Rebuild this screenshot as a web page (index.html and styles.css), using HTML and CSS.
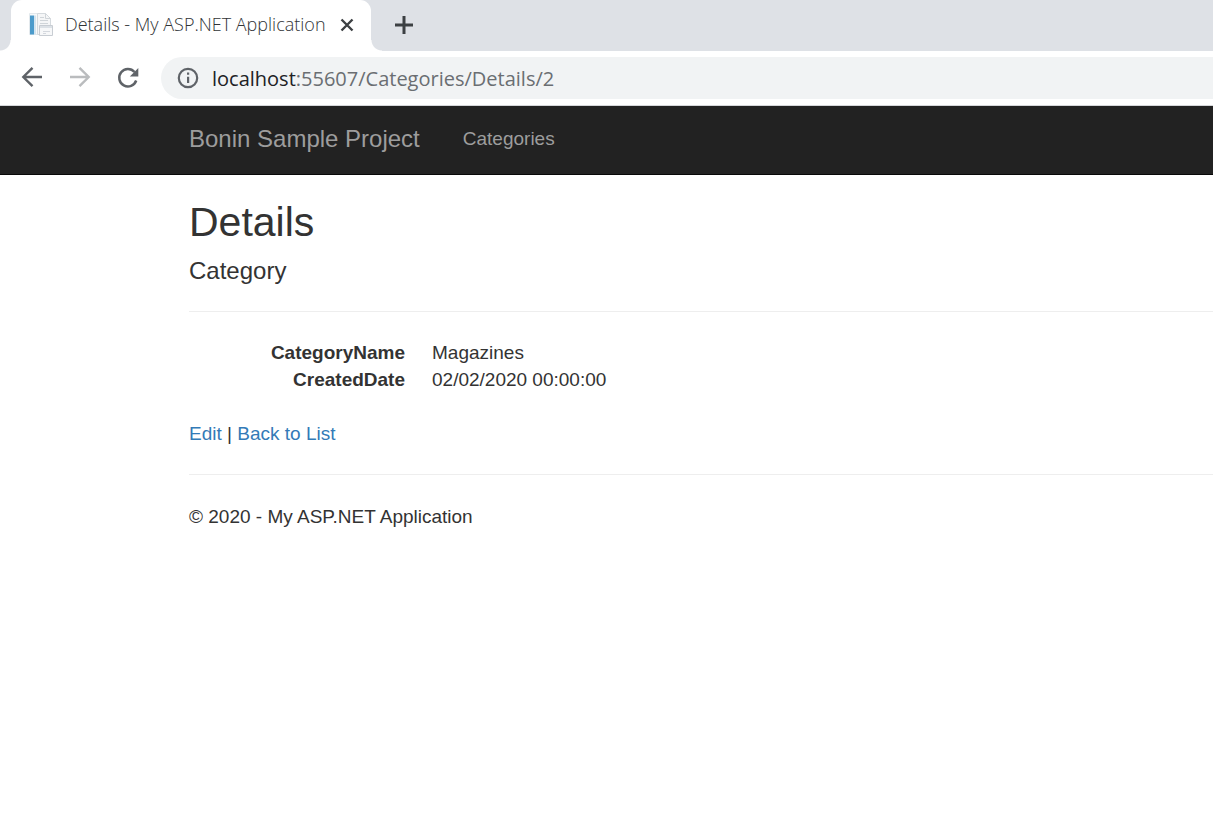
FILE: index.html
```html
<!DOCTYPE html>
<html lang="en">
<head>
<meta charset="utf-8">
<meta name="viewport" content="width=device-width, initial-scale=1">
<title>Details - My ASP.NET Application</title>
<link rel="stylesheet" href="styles.css">
</head>
<body>
<div class="browser">
  <div class="tab-strip">
    <div class="tab">
      <svg class="favicon" width="26" height="26" viewBox="0 0 26 26" aria-hidden="true">
        <path d="M1.500 1.500h15l5 5v16h-20z" fill="#f7f9fa" stroke="#e3e9ed"/>
        <path d="M2 3.500h4v19h-4z" fill="#4c9bcb"/>
        <path d="M6 3.500h2v19h-2z" fill="#d3e4ef"/>
        <path d="M9.500 1.500h8l5 5v16h-13z" fill="#f5f6f7" stroke="#d5dade"/>
        <path d="M17.500 1.500v5h5M12 5.500h4M12 8.500h8M12 11.500h8" fill="none" stroke="#d0d5d9"/>
        <path d="M11.500 13.500h13v10h-13z" fill="#f7f8f9" stroke="#c8cdd3"/>
        <path d="M12 14h12v2H12z" fill="#dce1e6"/>
        <path d="M15 19.500h7M15 21.500h3" stroke="#d4d8de"/>
      </svg>
      <span class="tab-title">Details - My ASP.NET Application</span>
      <button class="icon-button tab-close" type="button" aria-label="Close tab">
        <svg width="14" height="14" viewBox="0 0 14 14"><path d="M1.500 1.500l11 11M12.500 1.500l-11 11" stroke="#3c4043" stroke-width="2.400"/></svg>
      </button>
    </div>
    <button class="icon-button new-tab" type="button" aria-label="New tab">
      <svg width="20" height="20" viewBox="0 0 20 20"><path d="M10 1v18M1 10h18" stroke="#3c4043" stroke-width="3"/></svg>
    </button>
  </div>
  <div class="toolbar">
    <button class="icon-button" type="button" aria-label="Back">
      <svg width="24" height="24" viewBox="0 0 24 24" fill="none" stroke="#5f6368" stroke-width="2.400"><path d="M22 11H3.500M12.500 1.800L3.300 11l9.200 9.200"/></svg>
    </button>
    <button class="icon-button" type="button" aria-label="Forward" disabled>
      <svg width="24" height="24" viewBox="0 0 24 24" fill="none" stroke="#babcbe" stroke-width="2.400"><path d="M2 11h18.500M11.500 1.800l9.200 9.200-9.200 9.200"/></svg>
    </button>
    <button class="icon-button" type="button" aria-label="Reload">
      <svg width="24" height="24" viewBox="0 0 24 24"><path d="M20.200 14.500A8.700 8.700 0 1 1 18.500 6" fill="none" stroke="#5f6368" stroke-width="2.500"/><path d="M22.300 2v8.500h-8.500z" fill="#5f6368"/></svg>
    </button>
    <div class="address-bar">
      <svg width="22" height="22" viewBox="0 0 22 22" aria-hidden="true"><circle cx="11" cy="11" r="9.200" fill="none" stroke="#5f6368" stroke-width="2.200"/><path d="M10 5.500h2.200v2.200H10zM10 9.700h2.200v6.300H10z" fill="#5f6368"/></svg>
      <span class="url"><span class="url-host">localhost</span>:55607/Categories/Details/2</span>
    </div>
  </div>
</div>
<header class="navbar">
  <nav class="container nav-row">
    <a class="brand" href="#">Bonin Sample Project</a>
    <a class="nav-link" href="#">Categories</a>
  </nav>
</header>
<main class="container">
  <h2 class="page-title">Details</h2>
  <h4 class="subtitle">Category</h4>
  <hr class="rule">
  <dl class="details">
    <dt>CategoryName</dt><dd>Magazines</dd>
    <dt>CreatedDate</dt><dd>02/02/2020 00:00:00</dd>
  </dl>
  <p class="actions"><a href="#">Edit</a> | <a href="#">Back to List</a></p>
  <hr class="rule">
  <footer class="footer"><p class="copyright">© 2020 - My ASP.NET Application</p></footer>
</main>
</body>
</html>
```
FILE: styles.css
```css
* { box-sizing: border-box; }
body {
  margin: 0;
  background: #fff;
  color: #333;
  font: 19px/27px "Liberation Sans", Arial, sans-serif;
}
.browser {
  font-family: "Open Sans", "Noto Sans", sans-serif;
  border-bottom: 1px solid #d5d7da;
}
.icon-button {
  display: flex;
  padding: 0;
  border: 0;
  background: none;
}
.tab-strip {
  display: flex;
  align-items: center;
  height: 51px;
  padding-left: 11px;
  background: #dee1e6;
}
.tab {
  position: relative;
  display: flex;
  align-items: center;
  flex: 0 0 360px;
  height: 100%;
  padding: 0 17px 2px;
  background: #fff;
  border-radius: 11px 11px 0 0;
}
.tab::before,
.tab::after {
  content: "";
  position: absolute;
  bottom: 0;
  width: 11px;
  height: 11px;
}
.tab::before {
  right: 100%;
  background: radial-gradient(circle at 0 0, transparent 10px, #fff 11px);
}
.tab::after {
  left: 100%;
  background: radial-gradient(circle at 100% 0, transparent 10px, #fff 11px);
}
.favicon { flex: none; margin-right: 11px; }
.tab-title {
  flex: 1;
  min-width: 0;
  color: #303336;
  font-size: 18px;
  font-weight: 300;
  white-space: nowrap;
}
.new-tab { margin: 0 0 2px 23px; }
.toolbar {
  display: flex;
  align-items: center;
  gap: 24px;
  height: 54px;
  padding-left: 20px;
}
.address-bar {
  flex: 1;
  display: flex;
  align-items: center;
  gap: 13px;
  height: 42px;
  margin-left: -3px;
  padding-left: 16px;
  background: #f1f3f4;
  border-radius: 21px 0 0 21px;
}
.url { color: #6a6e72; font-size: 20px; }
.url-host { color: #202124; }
.container { padding-left: 189px; }
.navbar {
  background: #222;
  border-bottom: 1px solid #080808;
}
.nav-row {
  display: flex;
  align-items: center;
  gap: 43px;
  height: 68px;
  padding-bottom: 4px;
}
.nav-row a { color: #9d9d9d; text-decoration: none; }
.brand { font-size: 24px; }
.page-title {
  margin: 25px 0 13px;
  font-size: 41px;
  line-height: 44px;
  font-weight: 400;
}
.subtitle {
  margin: 0;
  font-size: 24px;
  line-height: 27px;
  font-weight: 400;
}
.rule {
  margin: 27px 0;
  border: 0;
  border-top: 1px solid #eee;
}
.details {
  display: grid;
  grid-template-columns: 216px 1fr;
  column-gap: 27px;
  margin: 0 0 27px;
}
.details dt { font-weight: 700; text-align: right; }
.details dd { margin: 0; }
.actions { margin: 0; }
.actions a { color: #337ab7; text-decoration: none; }
.footer { padding-top: 1px; }
.copyright { margin: 0; }
```
